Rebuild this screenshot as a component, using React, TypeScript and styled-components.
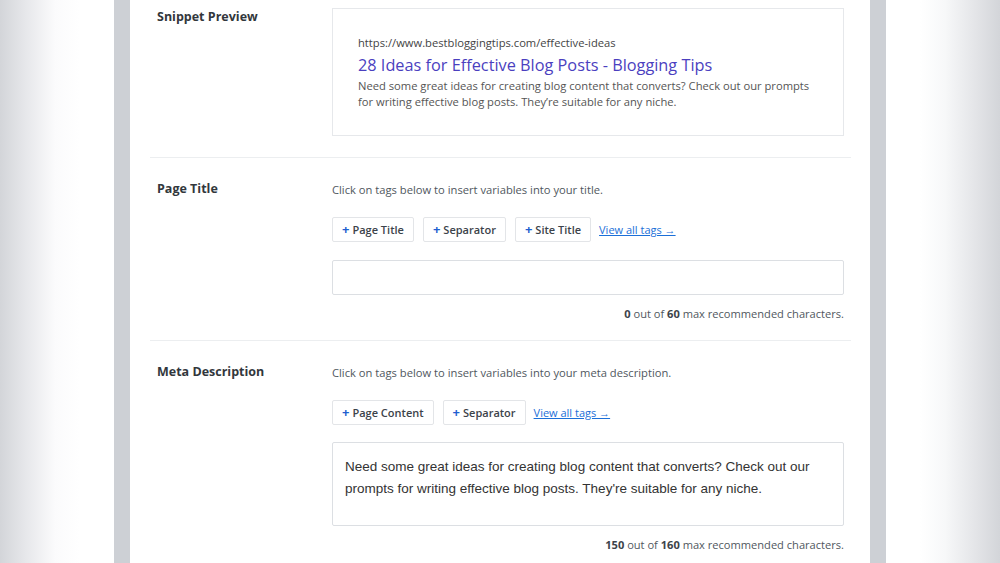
import React from "react";
import styled, { createGlobalStyle } from "styled-components";

const Global = createGlobalStyle`
  html, body { margin: 0; padding: 0; background: #fff; }
  body { font-family: "Open Sans", "Noto Sans", sans-serif; }
  * { box-sizing: border-box; }
`;

const Page = styled.div`
  display: flex;
  width: 1000px;
  height: 563px;
  overflow: hidden;
  background: #fff;
`;

const SideBlur = styled.div<{ $side: "left" | "right" }>`
  width: 114px;
  flex: none;
  background: ${(p) =>
    p.$side === "left"
      ? "linear-gradient(to right, #d3d5d9 0px, #e6e7ea 25px, #fbfbfc 55px, #ffffff 80px)"
      : "linear-gradient(to left, #d3d5d9 0px, #e4e5e8 25px, #f7f8f9 55px, #ffffff 80px)"};
`;

const Rail = styled.div`
  width: 16px;
  flex: none;
  background: #cdd0d5;
`;

const Panel = styled.div`
  flex: 1;
  background: #fff;
  padding: 0 19px 0 20px;
`;

const Section = styled.section<{ $pt: number; $pb: number; $last?: boolean }>`
  display: grid;
  grid-template-columns: 175px 1fr;
  align-items: start;
  padding: ${(p) => p.$pt}px 7px ${(p) => p.$pb}px;
  border-bottom: ${(p) => (p.$last ? "none" : "1px solid #eceef0")};
`;

const Label = styled.div<{ $mt?: number }>`
  font-size: 12.5px;
  line-height: 18px;
  font-weight: 700;
  color: #32373c;
  margin-top: ${(p) => p.$mt ?? 0}px;
`;

const Field = styled.div`
  display: flex;
  flex-direction: column;
  min-width: 0;
`;

const SnippetBox = styled.div`
  height: 128px;
  border: 1px solid #e6e8eb;
  padding: 26px 25px 0;
`;

const Url = styled.div`
  font-size: 11.2px;
  line-height: 16px;
  color: #444;
`;

const SnippetTitle = styled.div`
  font-size: 16.3px;
  line-height: 22px;
  color: #4b3fbf;
  margin-top: 3px;
`;

const SnippetDesc = styled.div`
  font-size: 11.2px;
  line-height: 16px;
  color: #555;
  margin-top: 2px;
`;

const Hint = styled.div`
  font-size: 11.2px;
  line-height: 16px;
  color: #50575e;
`;

const TagRow = styled.div<{ $mt: number }>`
  display: flex;
  align-items: center;
  gap: 9px;
  height: 25px;
  margin-top: ${(p) => p.$mt}px;
`;

const Tag = styled.button`
  height: 25px;
  padding: 0 9px;
  border: 1px solid #e3e5e8;
  border-radius: 2px;
  background: #fff;
  font-family: "Open Sans", "Noto Sans", sans-serif;
  font-size: 11px;
  font-weight: 600;
  color: #3c434a;
  display: flex;
  align-items: center;
  gap: 3px;
`;

const Plus = styled.span`
  color: #1f5fd0;
  font-weight: 700;
  font-size: 13px;
  line-height: 1;
  margin-top: -1px;
`;

const ViewAll = styled.a`
  font-size: 11px;
  color: #1b6fd8;
  text-decoration: underline;
  margin-left: -1px;
`;

const TextInput = styled.div`
  margin-top: 18px;
  height: 35px;
  border: 1px solid #dcdfe3;
  border-radius: 2px;
`;

const TextArea = styled.div`
  margin-top: 17px;
  height: 84px;
  border: 1px solid #dcdfe3;
  border-radius: 2px;
  padding: 13px 12px;
  font-family: "Liberation Sans", Arial, sans-serif;
  font-size: 13.5px;
  line-height: 22px;
  color: #333;
`;

const Counter = styled.div<{ $mt: number }>`
  margin-top: ${(p) => p.$mt}px;
  text-align: right;
  font-size: 11.1px;
  line-height: 16px;
  color: #50575e;
  b { font-weight: 700; color: #3c434a; }
`;

function Tags({ items, mt }: { items: string[]; mt: number }) {
  return (
    <TagRow $mt={mt}>
      {items.map((t) => (
        <Tag key={t}>
          <Plus>+</Plus>
          {t}
        </Tag>
      ))}
      <ViewAll>View all tags →</ViewAll>
    </TagRow>
  );
}

export default function App() {
  return (
    <>
      <Global />
      <Page>
        <SideBlur $side="left" />
        <Rail />
        <Panel>
          <Section $pt={8} $pb={21}>
            <Label>Snippet Preview</Label>
            <Field>
              <SnippetBox>
                <Url>https://www.bestbloggingtips.com/effective-ideas</Url>
                <SnippetTitle>28 Ideas for Effective Blog Posts - Blogging Tips</SnippetTitle>
                <SnippetDesc>
                  Need some great ideas for creating blog content that converts? Check out our prompts
                  <br />
                  for writing effective blog posts. They’re suitable for any niche.
                </SnippetDesc>
              </SnippetBox>
            </Field>
          </Section>
          <Section $pt={24} $pb={18}>
            <Label $mt={-2}>Page Title</Label>
            <Field>
              <Hint>Click on tags below to insert variables into your title.</Hint>
              <Tags items={["Page Title", "Separator", "Site Title"]} mt={19} />
              <TextInput />
              <Counter $mt={11}>
                <b>0</b> out of <b>60</b> max recommended characters.
              </Counter>
            </Field>
          </Section>
          <Section $pt={24} $pb={0} $last>
            <Label $mt={-2}>Meta Description</Label>
            <Field>
              <Hint>Click on tags below to insert variables into your meta description.</Hint>
              <Tags items={["Page Content", "Separator"]} mt={19} />
              <TextArea>
                Need some great ideas for creating blog content that converts? Check out our prompts
                for writing effective blog posts. They're suitable for any niche.
              </TextArea>
              <Counter $mt={11}>
                <b>150</b> out of <b>160</b> max recommended characters.
              </Counter>
            </Field>
          </Section>
        </Panel>
        <Rail />
        <SideBlur $side="right" />
      </Page>
    </>
  );
}
